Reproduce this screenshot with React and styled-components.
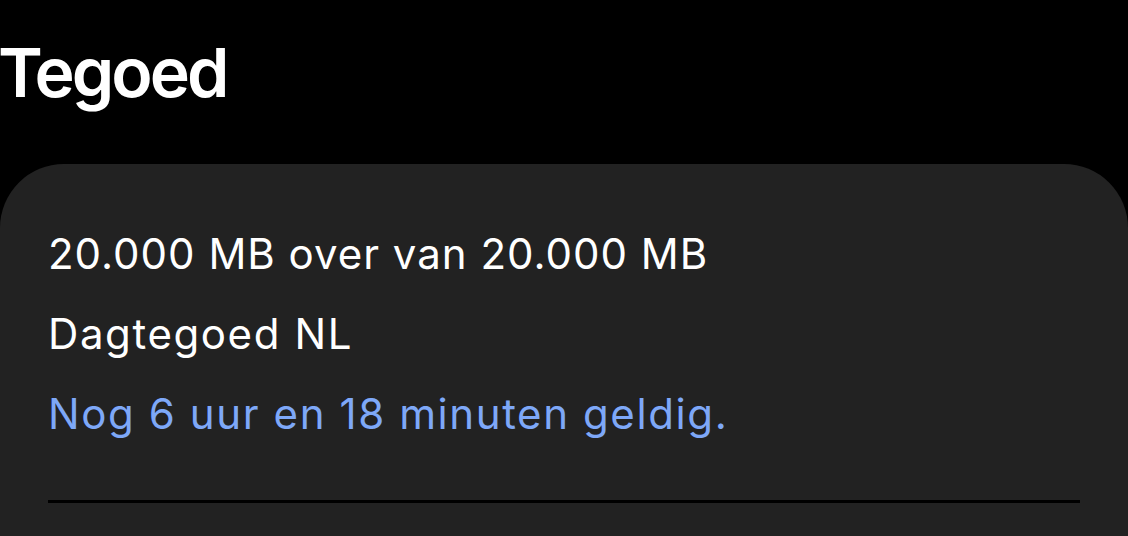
import React from 'react';
import styled, { createGlobalStyle } from 'styled-components';

const Global = createGlobalStyle`
  html, body {
    margin: 0;
    padding: 0;
    background: #000;
  }
  body {
    font-family: Inter, "Noto Sans", sans-serif;
    color: #fff;
    overflow: hidden;
  }
`

const Page = styled.div`
  width: 1128px;
  height: 536px;
  background: #000;
  display: flex;
  flex-direction: column;
`

const Title = styled.h1`
  margin: 0 0 0 -2px;
  padding: 32px 0 0 0;
  height: 130px;
  box-sizing: border-box;
  font-size: 68px;
  font-weight: 600;
  letter-spacing: -3px;
  line-height: 80px;
  color: #fff;
`

const Card = styled.section`
  flex: 1;
  background: #222222;
  border-radius: 64px 64px 0 0;
  padding: 50px 48px 0;
  margin-top: 34px;
`

const Line = styled.p`
  margin: 0;
  font-size: 42px;
  line-height: 80px;
  font-weight: 400;
  letter-spacing: ${p => (p.$wide ? '1.6px' : '1px')};
  color: ${p => (p.$accent ? '#7ea8f8' : '#fff')};
`

const Divider = styled.hr`
  margin: 46px 0 0;
  border: none;
  height: 3px;
  background: #000;
`

export default function App() {
  return (
    <Page>
      <Global />
      <Title>Tegoed</Title>
      <Card>
        <Line>20.000 MB over van 20.000 MB</Line>
        <Line $wide>Dagtegoed NL</Line>
        <Line $wide $accent>Nog 6 uur en 18 minuten geldig.</Line>
        <Divider />
      </Card>
    </Page>
  );
}
